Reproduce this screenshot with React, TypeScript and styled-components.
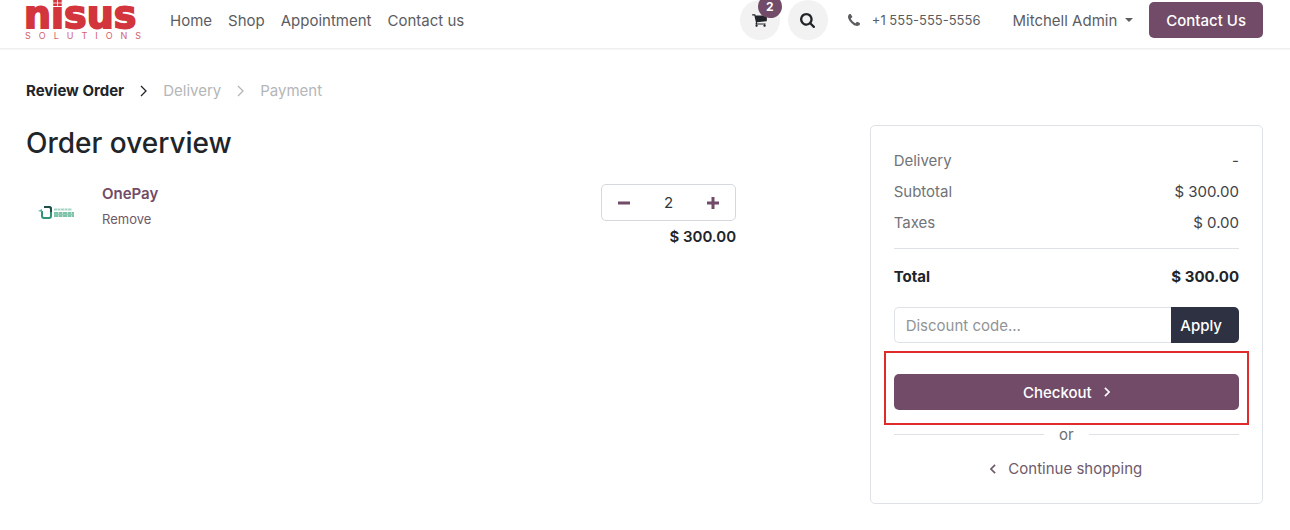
import React, { useState } from 'react';
import styled, { createGlobalStyle } from 'styled-components';

const plum = '#714b67';
const line = '#dee2e6';

const GlobalStyle = createGlobalStyle`
  *, *::before, *::after { box-sizing: border-box; }
  body {
    margin: 0;
    background: #fff;
    color: #212529;
    font: 400 15px/23px Inter, "Liberation Sans", sans-serif;
  }
  button, input { font: inherit; }
  a { color: inherit; text-decoration: none; }
`;

const Header = styled.header`
  display: flex;
  align-items: center;
  justify-content: space-between;
  padding: 0 27px 8px 26px;
  border-bottom: 1px solid #efefef;
  box-shadow: 0 1px 1px #f6f6f6;
`;

const HeaderSide = styled.div`
  display: flex;
  align-items: center;
`;

const Brand = styled.a`
  display: block;
  width: 114px;
  height: 40px;
  margin-right: 30px;
  svg { overflow: visible; }
`;

const Nav = styled.nav`
  display: flex;
  gap: 16px;
  color: #5c5d5f;
`;

const RoundButton = styled.button`
  position: relative;
  display: grid;
  place-items: center;
  width: 40px;
  height: 40px;
  margin-right: 8px;
  padding: 0;
  border: 0;
  border-radius: 50%;
  background: #f2f2f2;
  color: #212529;
`;

const Badge = styled.span`
  position: absolute;
  top: -5px;
  right: -2px;
  width: 24px;
  height: 23px;
  border-radius: 12px;
  background: ${plum};
  color: #fff;
  font-size: 12px;
  font-weight: 700;
`;

const Phone = styled.a`
  display: flex;
  align-items: center;
  gap: 12px;
  margin: 0 32px 0 12px;
  color: #5c5d5f;
  font-size: 13px;
`;

const UserMenu = styled.button`
  display: flex;
  align-items: center;
  gap: 8px;
  margin-right: 16px;
  padding: 0;
  border: 0;
  background: none;
  color: #5c5d5f;
`;

const Caret = styled.span`
  border: 4px solid transparent;
  border-top-color: currentColor;
  border-bottom: 0;
`;

const PrimaryButton = styled.button<{ $block?: boolean }>`
  display: flex;
  align-items: center;
  justify-content: center;
  gap: 12px;
  width: ${(p) => (p.$block ? '100%' : 'auto')};
  height: 36px;
  padding: 0 17px;
  border: 0;
  border-radius: 5px;
  background: ${plum};
  color: #fff;
  font-weight: 500;
`;

const Main = styled.main`
  padding: 30px 27px 26px 26px;
`;

const Steps = styled.ol`
  display: flex;
  align-items: center;
  gap: 16px;
  margin: 0 0 23px;
  padding: 0;
  list-style: none;
`;

const Step = styled.li<{ $current?: boolean }>`
  display: flex;
  align-items: center;
  gap: 16px;
  color: ${(p) => (p.$current ? '#212529' : '#b4b6b8')};
  font-weight: ${(p) => (p.$current ? 700 : 400)};
`;

const Columns = styled.div`
  display: flex;
  align-items: flex-start;
  justify-content: space-between;
`;

const Cart = styled.section`
  width: 57.4%;
`;

const Title = styled.h1`
  margin: 0 0 23px;
  font-size: 28px;
  line-height: 36px;
  font-weight: 500;
`;

const Item = styled.article`
  display: flex;
  align-items: flex-start;
`;

const Thumb = styled.div`
  width: 62px;
  margin-right: 14px;
  padding: 21px 0 0 12px;
  line-height: 0;
`;

const ItemInfo = styled.div`
  flex: 1;
`;

const ItemName = styled.h2`
  margin: -2px 0 2px;
  color: ${plum};
  font-size: 15px;
  line-height: 23px;
  font-weight: 600;
`;

const TextButton = styled.button`
  padding: 0;
  border: 0;
  background: none;
  color: #6f5a6a;
  font-size: 13px;
  line-height: 20px;
`;

const ItemSide = styled.div`
  width: 135px;
  text-align: right;
  font-weight: 600;
`;

const Stepper = styled.div`
  display: flex;
  height: 37px;
  margin-bottom: 4px;
  border: 1px solid #d5d8dc;
  border-radius: 5px;
`;

const StepButton = styled.button`
  display: grid;
  place-items: center;
  width: 44px;
  padding: 0;
  border: 0;
  background: none;
  color: ${plum};
`;

const Quantity = styled.input`
  flex: 1;
  min-width: 0;
  padding: 0;
  border: 0;
  background: none;
  color: #33373b;
  font-weight: 400;
  text-align: center;
`;

const Summary = styled.aside`
  width: 31.8%;
  padding: 23px;
  border: 1px solid ${line};
  border-radius: 5px;
`;

const Totals = styled.table`
  width: 100%;
  margin-bottom: 19px;
  border-collapse: collapse;
`;

const TotalRow = styled.tr<{ $grand?: boolean }>`
  border-top: ${(p) => (p.$grand ? `1px solid ${line}` : '0')};
  color: ${(p) => (p.$grand ? '#212529' : '#3f4347')};
  th, td {
    padding: ${(p) => (p.$grand ? '16px 0 0' : '0 0 8px')};
    font-weight: ${(p) => (p.$grand ? 700 : 400)};
  }
  th {
    color: ${(p) => (p.$grand ? '#212529' : '#717478')};
    text-align: left;
  }
  td { text-align: right; }
  &:nth-last-child(2) th, &:nth-last-child(2) td { padding-bottom: 14px; }
`;

const Discount = styled.form`
  display: flex;
  height: 36px;
  margin-bottom: 31px;
`;

const DiscountInput = styled.input`
  flex: 1;
  min-width: 0;
  padding: 0 11px;
  border: 1px solid ${line};
  border-right: 0;
  border-radius: 5px 0 0 5px;
  &::placeholder { color: #919497; opacity: 1; }
`;

const ApplyButton = styled.button`
  padding: 0 17px 0 9px;
  border: 0;
  border-radius: 0 5px 5px 0;
  background: #2d3142;
  color: #fff;
  font-weight: 500;
`;

const Highlight = styled.div`
  position: relative;
  margin-bottom: 13px;
  &::after {
    content: '';
    position: absolute;
    inset: -23px -10px -15px;
    border: 2px solid #e02b2b;
    pointer-events: none;
  }
`;

const Or = styled.div`
  display: flex;
  align-items: center;
  gap: 15px;
  margin-bottom: 11px;
  color: #6b6e72;
  &::before, &::after {
    content: '';
    flex: 1;
    border-top: 1px solid ${line};
  }
`;

const ContinueLink = styled.a`
  display: flex;
  align-items: center;
  justify-content: center;
  gap: 12px;
  color: #6f5a6a;
`;

function Logo() {
  return (
    <svg width="114" height="40" viewBox="0 0 114 40" role="img" aria-label="nisus solutions">
      <text x="-2" y="28" fontFamily="DejaVu Sans" fontWeight="700" fontSize="38" fill="#d2353c" stroke="#d2353c" strokeWidth="1.800">nisus</text>
      <path d="M27 3h9M31.500 0v6" stroke="#fff" strokeWidth=".8" />
      <path d="M26 6.500h11" stroke="#fff" strokeWidth="1" />
      <text x="-1" y="39" fontFamily="Inter" fontSize="9" letterSpacing="8" fill="#d4616a">SOLUTIONS</text>
    </svg>
  );
}

function Chevron({ size = 10, left = false, weight = 1.3 }: { size?: number; left?: boolean; weight?: number }) {
  return (
    <svg width={size / 2 + 2} height={size + 2} viewBox="0 0 7 12" fill="none" stroke="currentColor" strokeWidth={weight} aria-hidden="true">
      <path d={left ? 'M6 1L1 6l5 5' : 'M1 1l5 5-5 5'} />
    </svg>
  );
}

const icons = {
  cart: 'M640 1536q0 52-38 90t-90 38-90-38-38-90 38-90 90-38 90 38 38 90zm896 0q0 52-38 90t-90 38-90-38-38-90 38-90 90-38 90 38 38 90zm128-1088v512q0 24-16.500 42.500t-40.500 21.500l-1044 122q13 60 13 70 0 16-24 64h920q26 0 45 19t19 45-19 45-45 19h-1024q-26 0-45-19t-19-45q0-11 8-31.500t16-36 21.500-40 15.500-29.500l-177-823h-204q-26 0-45-19t-19-45 19-45 45-19h256q16 0 28.500 6.500t19.500 15.500 13 24.500 8 26 5.500 29.500 4.500 26h1201q26 0 45 19t19 45z',
  search: 'M1152 832q0-185-131.500-316.500t-316.500-131.500-316.500 131.500-131.500 316.500 131.500 316.500 316.500 131.500 316.500-131.500 131.500-316.500zm512 832q0 52-38 90t-90 38q-54 0-90-38l-343-342q-179 124-399 124-143 0-273.500-55.500t-225-150-150-225-55.500-273.500 55.500-273.500 150-225 225-150 273.500-55.500 273.500 55.500 225 150 150 225 55.500 273.500q0 220-124 399l343 343q37 37 37 90z',
  phone: 'M1408 1240q0 27-10 70.500t-21 68.500q-21 50-122 106-94 51-186 51-27 0-53-3.500t-57.500-12.500-47-14.500-55.500-20.500-49-18q-98-35-175-83-127-79-264-216t-216-264q-48-77-83-175-3-9-18-49t-20.500-55.500-14.500-47-12.500-57.500-3.500-53q0-92 51-186 56-101 106-122 25-11 68.500-21t70.500-10q14 0 21 3 18 6 53 76 11 19 30 54t35 63.500 31 53.500q3 4 17.500 25t21.500 35.500 7 28.500q0 20-28.500 50t-62 55-62 53-28.500 46q0 9 5 22.500t8.500 20.500 14 24 11.500 19q76 137 174 235t235 174q2 1 19 11.500t24 14 20.500 8.500 22.500 5q18 0 46-28.500t53-62 55-62 50-28.500q14 0 28.500 7t35.500 21.500 25 17.500q25 15 53.500 31t63.500 35 54 30q70 35 76 53 3 7 3 21z',
};

function Icon({ name, size, box }: { name: keyof typeof icons; size: number; box: string }) {
  return (
    <svg width={size} height={size} viewBox={box} fill="currentColor" aria-hidden="true">
      <path d={icons[name]} />
    </svg>
  );
}

function ProductMark() {
  return (
    <svg width="38" height="15" viewBox="0 0 38 15" aria-hidden="true">
      <path d="M4 6v5q0 2 2 2h5q2 0 2-2V4q0-2-2-2H6" fill="none" stroke="#2f9477" strokeWidth="2" />
      <path d="M6 2h5q2 0 2 2v3" fill="none" stroke="#214f48" strokeWidth="2" />
      <path d="M0 6l4-2v3z" fill="#55b497" />
      <path d="M16 4.500h18" stroke="#a5d5c5" strokeWidth="2" strokeDasharray="3 .5" />
      <path d="M16 8h20M16 11h20" stroke="#7cc3a9" strokeWidth="2" strokeDasharray="4 .5" />
      <path d="M16 9.500h20" stroke="#8fcbb5" />
    </svg>
  );
}

export default function App() {
  const [quantity, setQuantity] = useState(2);
  const price = `$ ${(quantity * 150).toFixed(2)}`;

  return (
    <>
      <GlobalStyle />
      <Header>
        <HeaderSide>
          <Brand href="#"><Logo /></Brand>
          <Nav>
            <a href="#">Home</a>
            <a href="#">Shop</a>
            <a href="#">Appointment</a>
            <a href="#">Contact us</a>
          </Nav>
        </HeaderSide>
        <HeaderSide>
          <RoundButton aria-label="Cart">
            <Icon name="cart" size={16} box="0 0 1792 1792" />
            <Badge>{quantity}</Badge>
          </RoundButton>
          <RoundButton aria-label="Search">
            <Icon name="search" size={15} box="0 128 1664 1664" />
          </RoundButton>
          <Phone href="tel:+15555555556">
            <Icon name="phone" size={12} box="0 128 1408 1408" />
            +1 555-555-5556
          </Phone>
          <UserMenu>Mitchell Admin<Caret /></UserMenu>
          <PrimaryButton>Contact Us</PrimaryButton>
        </HeaderSide>
      </Header>
      <Main>
        <Steps>
          <Step $current>Review Order<Chevron /></Step>
          <Step>Delivery<Chevron /></Step>
          <Step>Payment</Step>
        </Steps>
        <Columns>
          <Cart>
            <Title>Order overview</Title>
            <Item>
              <Thumb><ProductMark /></Thumb>
              <ItemInfo>
                <ItemName>OnePay</ItemName>
                <TextButton>Remove</TextButton>
              </ItemInfo>
              <ItemSide>
                <Stepper>
                  <StepButton aria-label="Remove one" onClick={() => setQuantity(Math.max(1, quantity - 1))}>
                    <svg width="12" height="12" viewBox="0 0 12 12" stroke="currentColor" strokeWidth="3"><path d="M0 6h12" /></svg>
                  </StepButton>
                  <Quantity aria-label="Quantity" value={quantity} readOnly />
                  <StepButton aria-label="Add one" onClick={() => setQuantity(quantity + 1)}>
                    <svg width="12" height="12" viewBox="0 0 12 12" stroke="currentColor" strokeWidth="3"><path d="M0 6h12M6 0v12" /></svg>
                  </StepButton>
                </Stepper>
                {price}
              </ItemSide>
            </Item>
          </Cart>
          <Summary>
            <Totals>
              <tbody>
                <TotalRow><th scope="row">Delivery</th><td>-</td></TotalRow>
                <TotalRow><th scope="row">Subtotal</th><td>{price}</td></TotalRow>
                <TotalRow><th scope="row">Taxes</th><td>$ 0.00</td></TotalRow>
                <TotalRow $grand><th scope="row">Total</th><td>{price}</td></TotalRow>
              </tbody>
            </Totals>
            <Discount onSubmit={(e) => e.preventDefault()}>
              <DiscountInput aria-label="Discount code" placeholder="Discount code..." />
              <ApplyButton>Apply</ApplyButton>
            </Discount>
            <Highlight>
              <PrimaryButton $block>Checkout<Chevron size={8} weight={2} /></PrimaryButton>
            </Highlight>
            <Or>or</Or>
            <ContinueLink href="#"><Chevron size={8} weight={2} left />Continue shopping</ContinueLink>
          </Summary>
        </Columns>
      </Main>
    </>
  );
}
